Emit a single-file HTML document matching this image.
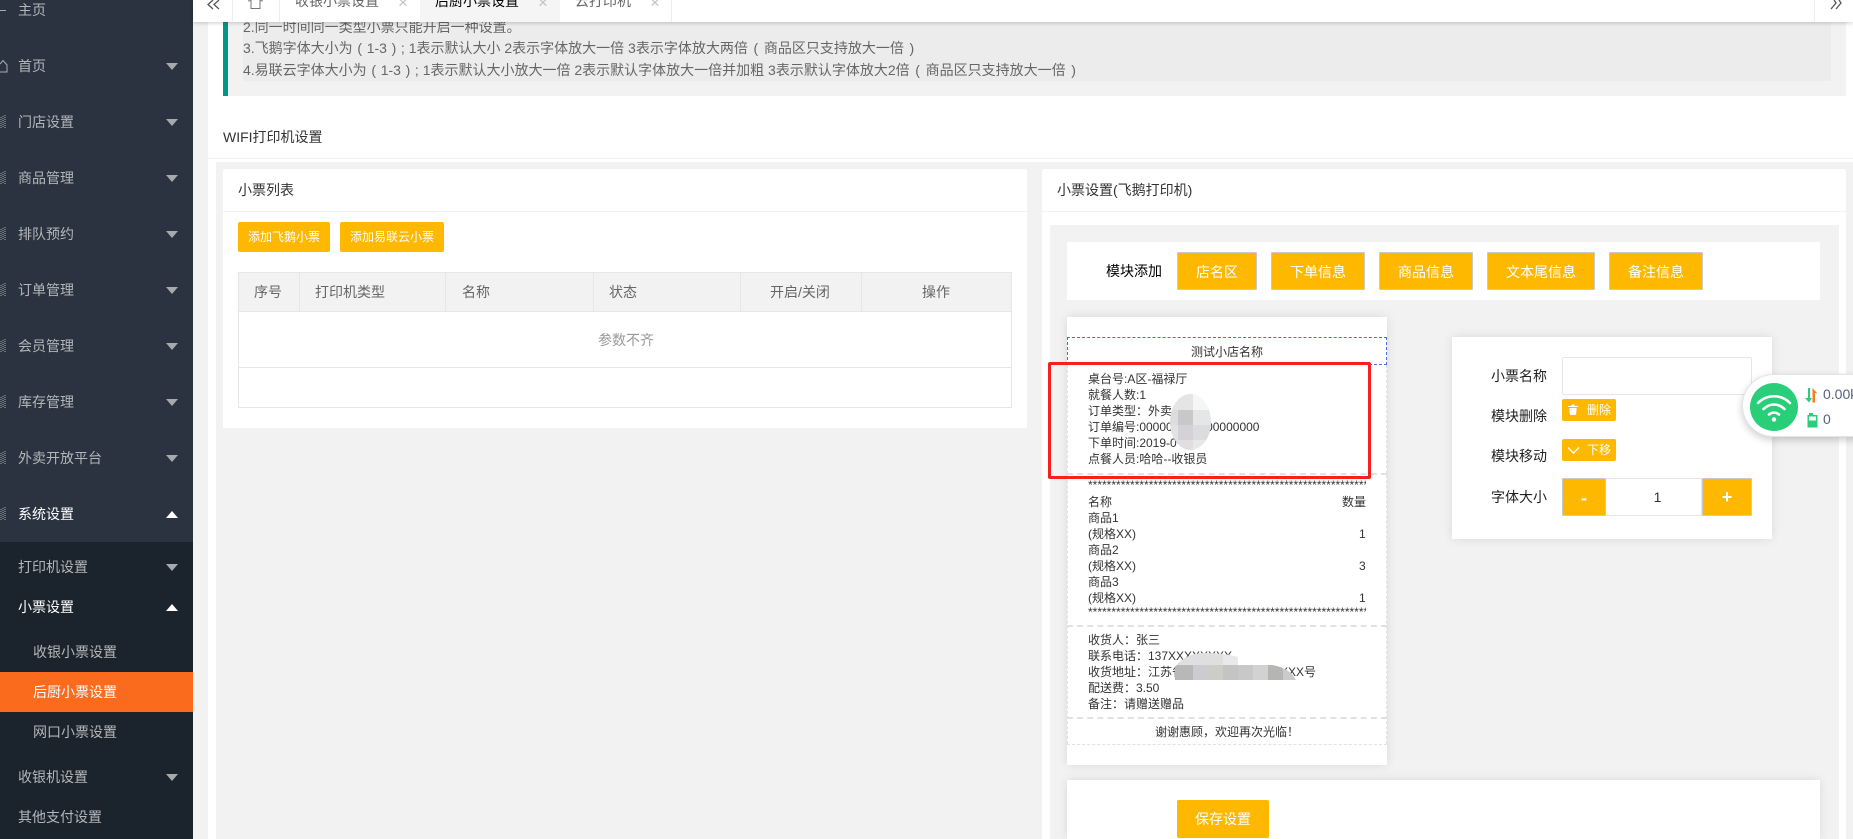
<!DOCTYPE html>
<html lang="zh-CN">
<head>
<meta charset="utf-8">
<title>后厨小票设置</title>
<style>
html,body{margin:0;padding:0;width:1853px;height:839px;overflow:hidden;background:#fff}
body{position:relative;font-family:"Liberation Sans","Noto Sans CJK SC",sans-serif;font-size:14px;color:#333}
.a{position:absolute;box-sizing:border-box}
.t{position:absolute;white-space:nowrap;line-height:20px;height:20px}
.s{font-size:12px;line-height:16px;height:16px;color:#333}
.side{color:#b4b7ba;font-size:14px}
.tri{position:absolute;left:166px;width:0;height:0;border-left:6px solid transparent;border-right:6px solid transparent;border-top:7px solid #a6aaae}
.tri.up{border-top:0;border-bottom:7px solid #fff}
.btn{position:absolute;box-sizing:border-box;background:#ffb800;color:#fff;text-align:center;border-radius:2px;white-space:nowrap}
.mod{top:252px;height:38px;line-height:38px;font-size:14px;border:1px solid #c9c9c9;border-radius:1px}
.th{position:absolute;top:272px;height:40px;line-height:40px;color:#666;white-space:nowrap}
.vl{position:absolute;top:272px;height:40px;width:1px;background:#e6e6e6}
.dash{position:absolute;left:1067px;width:320px;height:0;border-top:1px dashed #e2e2e2}
.p{display:inline-block;width:14px;text-align:center}
.q{display:inline-block;width:16px;text-align:center}
.x{font-size:17px;color:#c2c2c2}
</style>
</head>
<body>

<!-- sidebar -->
<div class="a" style="left:0;top:0;width:193px;height:839px;background:#2a333f"></div>
<div class="a" style="left:0;top:542px;width:193px;height:297px;background:#1b232c"></div>
<div class="a" style="left:0;top:672px;width:193px;height:40px;background:#fb6b1e"></div>

<svg class="a" style="left:0;top:0" width="8" height="530" viewBox="0 0 8 530" fill="none" stroke="#a9adb1">
<path d="M0 10.5H6"/>
<path d="M0 64L3 60.5L7 65V72H0"/>
<g stroke-width="1" stroke-dasharray="1 1">
<path d="M1 117V128M3 116V128M5 115V128"/>
<path d="M1 173V184M3 172V184M5 171V184"/>
<path d="M1 229V240M3 228V240M5 227V240"/>
<path d="M1 285V296M3 284V296M5 283V296"/>
<path d="M1 341V352M3 340V352M5 339V352"/>
<path d="M1 397V408M3 396V408M5 395V408"/>
<path d="M1 453V464M3 452V464M5 451V464"/>
<path d="M1 509V520M3 508V520M5 507V520"/>
</g>
</svg>

<div class="t side" style="left:18px;top:0">主页</div>
<div class="t side" style="left:18px;top:56px">首页</div><div class="tri" style="top:63px"></div>
<div class="t side" style="left:18px;top:112px">门店设置</div><div class="tri" style="top:119px"></div>
<div class="t side" style="left:18px;top:168px">商品管理</div><div class="tri" style="top:175px"></div>
<div class="t side" style="left:18px;top:224px">排队预约</div><div class="tri" style="top:231px"></div>
<div class="t side" style="left:18px;top:280px">订单管理</div><div class="tri" style="top:287px"></div>
<div class="t side" style="left:18px;top:336px">会员管理</div><div class="tri" style="top:343px"></div>
<div class="t side" style="left:18px;top:392px">库存管理</div><div class="tri" style="top:399px"></div>
<div class="t side" style="left:18px;top:448px">外卖开放平台</div><div class="tri" style="top:455px"></div>
<div class="t side" style="left:18px;top:504px;color:#fff">系统设置</div><div class="tri up" style="top:511px"></div>
<div class="t side" style="left:18px;top:557px">打印机设置</div><div class="tri" style="top:564px"></div>
<div class="t side" style="left:18px;top:597px;color:#fff">小票设置</div><div class="tri up" style="top:604px"></div>
<div class="t side" style="left:33px;top:642px">收银小票设置</div>
<div class="t side" style="left:33px;top:682px;color:#fff">后厨小票设置</div>
<div class="t side" style="left:33px;top:722px">网口小票设置</div>
<div class="t side" style="left:18px;top:767px">收银机设置</div><div class="tri" style="top:774px"></div>
<div class="t side" style="left:18px;top:807px">其他支付设置</div>

<!-- gutter -->
<div class="a" style="left:193px;top:0;width:15px;height:839px;background:#f2f2f2"></div>

<!-- notice -->
<div class="a" style="left:223px;top:0;width:1623px;height:96px;background:#f2f2f2;border-left:5px solid #009688"></div>
<div class="a" style="left:243px;top:0;width:1588px;height:81px;background:#ececec"></div>
<div class="t" style="left:243px;top:17px;color:#666">2.同一时间同一类型小票只能开启一种设置。</div>
<div class="t" style="left:243px;top:38px;color:#666">3.飞鹅字体大小为<span class="p">(</span>1-3<span class="p">)</span>; 1表示默认大小 2表示字体放大一倍 3表示字体放大两倍<span class="q">(</span>商品区只支持放大一倍<span class="q">)</span></div>
<div class="t" style="left:243px;top:60px;color:#666">4.易联云字体大小为<span class="p">(</span>1-3<span class="p">)</span>; 1表示默认大小放大一倍 2表示默认字体放大一倍并加粗 3表示默认字体放大2倍<span class="q">(</span>商品区只支持放大一倍<span class="q">)</span></div>

<!-- header tabs -->
<div class="a" style="left:193px;top:0;width:1660px;height:22px;background:#fff;box-shadow:0 1px 4px rgba(0,0,0,.2)"></div>
<div class="a" style="left:420px;top:0;width:140px;height:22px;background:#f5f5f5"></div>
<div class="a" style="left:232px;top:0;width:1px;height:22px;background:#eee"></div>
<div class="a" style="left:279px;top:0;width:1px;height:22px;background:#eee"></div>
<div class="a" style="left:671px;top:0;width:1px;height:22px;background:#eee"></div>
<div class="a" style="left:1814px;top:0;width:1px;height:22px;background:#eee"></div>
<svg class="a" style="left:205px;top:0" width="16" height="10" fill="none" stroke="#555" stroke-width="1.3"><path d="M8 0L3 4.5L8 9M14 0L9 4.5L14 9"/></svg>
<svg class="a" style="left:247px;top:0" width="18" height="10" fill="none" stroke="#777"><path d="M1 1L4 .5V8.5H13V.5L16 1"/></svg>
<svg class="a" style="left:1828px;top:0" width="16" height="10" fill="none" stroke="#555" stroke-width="1.3"><path d="M6 0L8 3L3 9M11 0L13 3L8 9"/></svg>
<div class="t" style="left:295px;top:-9px;color:#666">收银小票设置</div>
<div class="t" style="left:435px;top:-9px;color:#000">后厨小票设置</div>
<div class="t" style="left:575px;top:-9px;color:#666">云打印机</div>
<div class="t x" style="left:398px;top:-7px">×</div>
<div class="t x" style="left:538px;top:-7px">×</div>
<div class="t x" style="left:650px;top:-7px">×</div>

<!-- title -->
<div class="t" style="left:223px;top:127px;color:#333">WIFI打印机设置</div>
<div class="a" style="left:208px;top:158px;width:1645px;height:1px;background:#f0f0f0"></div>

<!-- gray body -->
<div class="a" style="left:216px;top:162px;width:1637px;height:677px;background:#f2f2f2"></div>

<!-- left card -->
<div class="a" style="left:223px;top:169px;width:804px;height:259px;background:#fff;border-radius:2px"></div>
<div class="a" style="left:223px;top:211px;width:804px;height:1px;background:#f2f2f2"></div>
<div class="t" style="left:238px;top:180px;color:#333">小票列表</div>
<div class="btn" style="left:238px;top:222px;width:92px;height:30px;line-height:30px;font-size:12px">添加飞鹅小票</div>
<div class="btn" style="left:340px;top:222px;width:104px;height:30px;line-height:30px;font-size:12px">添加易联云小票</div>

<!-- table -->
<div class="a" style="left:238px;top:272px;width:774px;height:136px;border:1px solid #e6e6e6"></div>
<div class="a" style="left:238px;top:272px;width:774px;height:40px;background:#f2f2f2;border:1px solid #e6e6e6"></div>
<div class="vl" style="left:299px"></div>
<div class="vl" style="left:445px"></div>
<div class="vl" style="left:593px"></div>
<div class="vl" style="left:740px"></div>
<div class="vl" style="left:861px"></div>
<div class="th" style="left:254px">序号</div>
<div class="th" style="left:315px">打印机类型</div>
<div class="th" style="left:462px">名称</div>
<div class="th" style="left:609px">状态</div>
<div class="th" style="left:770px">开启/关闭</div>
<div class="th" style="left:922px">操作</div>
<div class="t" style="left:598px;top:330px;color:#999">参数不齐</div>
<div class="a" style="left:238px;top:367px;width:774px;height:1px;background:#e6e6e6"></div>

<!-- right card -->
<div class="a" style="left:1042px;top:169px;width:804px;height:670px;background:#fff;border-radius:2px 2px 0 0"></div>
<div class="a" style="left:1042px;top:211px;width:804px;height:1px;background:#f2f2f2"></div>
<div class="t" style="left:1057px;top:180px;color:#333">小票设置(飞鹅打印机)</div>
<div class="a" style="left:1050px;top:225px;width:789px;height:614px;background:#f2f2f2"></div>

<!-- module bar -->
<div class="a" style="left:1067px;top:242px;width:753px;height:58px;background:#fff"></div>
<div class="t" style="left:1106px;top:261px;color:#000">模块添加</div>
<div class="btn mod" style="left:1177px;width:80px">店名区</div>
<div class="btn mod" style="left:1271px;width:94px">下单信息</div>
<div class="btn mod" style="left:1379px;width:94px">商品信息</div>
<div class="btn mod" style="left:1487px;width:108px">文本尾信息</div>
<div class="btn mod" style="left:1609px;width:94px">备注信息</div>

<!-- receipt -->
<div class="a" style="left:1067px;top:317px;width:320px;height:448px;background:#fff;box-shadow:0 0 10px rgba(0,0,0,.1)"></div>
<div class="a" style="left:1067px;top:337px;width:320px;height:28px;border:1px dashed #4a6ee0"></div>
<div class="a" style="left:1067px;top:365px;width:320px;height:379px;border-left:1px dashed #e2e2e2;border-right:1px dashed #e2e2e2"></div>
<div class="dash" style="top:473px;border-top-width:2px"></div>
<div class="dash" style="top:625px;border-top-width:2px"></div>
<div class="dash" style="top:717px;border-top-width:2px"></div>
<div class="dash" style="top:744px"></div>

<div class="t s" style="left:1067px;width:320px;text-align:center;top:344px">测试小店名称</div>
<div class="t s" style="left:1088px;top:371px">桌台号:A区-福禄厅</div>
<div class="t s" style="left:1088px;top:387px">就餐人数:1</div>
<div class="t s" style="left:1088px;top:403px">订单类型：外卖</div>
<div class="t s" style="left:1088px;top:419px">订单编号:000000000000000000</div>
<div class="t s" style="left:1088px;top:435px">下单时间:2019-0</div>
<div class="t s" style="left:1088px;top:451px">点餐人员:哈哈--收银员</div>

<div class="t s" style="left:1088px;top:477px;width:278px;overflow:hidden">************************************************************</div>
<div class="t s" style="left:1088px;top:494px">名称</div><div class="t s" style="left:1342px;top:494px">数量</div>
<div class="t s" style="left:1088px;top:510px">商品1</div>
<div class="t s" style="left:1088px;top:526px">(规格XX)</div><div class="t s" style="left:1359px;top:526px">1</div>
<div class="t s" style="left:1088px;top:542px">商品2</div>
<div class="t s" style="left:1088px;top:558px">(规格XX)</div><div class="t s" style="left:1359px;top:558px">3</div>
<div class="t s" style="left:1088px;top:574px">商品3</div>
<div class="t s" style="left:1088px;top:590px">(规格XX)</div><div class="t s" style="left:1359px;top:590px">1</div>
<div class="t s" style="left:1088px;top:604px;width:278px;overflow:hidden">************************************************************</div>

<div class="t s" style="left:1088px;top:632px">收货人：张三</div>
<div class="t s" style="left:1088px;top:648px">联系电话：137XXXXXXXX</div>
<div class="t s" style="left:1088px;top:664px">收货地址：江苏省XXXXXXXXXXXXXXX号</div>
<div class="t s" style="left:1088px;top:680px">配送费：3.50</div>
<div class="t s" style="left:1088px;top:696px">备注：请赠送赠品</div>
<div class="t s" style="left:1067px;width:320px;text-align:center;top:724px">谢谢惠顾，欢迎再次光临！</div>

<!-- mosaics -->
<svg class="a" style="left:1160px;top:385px" width="60" height="75" viewBox="1160 385 60 75">
<defs><clipPath id="c1"><ellipse cx="1190.5" cy="422" rx="20.5" ry="28"/></clipPath></defs>
<g clip-path="url(#c1)">
<rect x="1160" y="385" width="33" height="25" fill="#e6e5e5"/>
<rect x="1193" y="385" width="27" height="25" fill="#f5f6f6"/>
<rect x="1160" y="410" width="18" height="15" fill="#dcdcdc"/>
<rect x="1178" y="410" width="15" height="15" fill="#c8c8c8"/>
<rect x="1193" y="410" width="27" height="15" fill="#e5e6e8"/>
<rect x="1160" y="425" width="18" height="15" fill="#e2e2e4"/>
<rect x="1178" y="425" width="15" height="15" fill="#d2d2d7"/>
<rect x="1193" y="425" width="27" height="15" fill="#dcdcdf"/>
<rect x="1160" y="440" width="33" height="15" fill="#e2dedd"/>
<rect x="1193" y="440" width="27" height="15" fill="#e8e8e8"/>
</g>
</svg>
<svg class="a" style="left:1170px;top:650px" width="130" height="32" viewBox="1170 650 130 32">
<defs><clipPath id="c2"><path d="M1175 680V667Q1185 653 1205 653Q1225 653 1238 657V665H1272Q1290 668 1296 680Z"/></clipPath></defs>
<g clip-path="url(#c2)">
<rect x="1170" y="650" width="53" height="15" fill="#dfdfdf"/>
<rect x="1223" y="650" width="15" height="15" fill="#e9e9e9"/>
<rect x="1170" y="665" width="23" height="15" fill="#b8b8b8"/>
<rect x="1193" y="665" width="15" height="15" fill="#ccccd0"/>
<rect x="1208" y="665" width="15" height="15" fill="#cdcdc8"/>
<rect x="1223" y="665" width="15" height="15" fill="#c4c4c4"/>
<rect x="1238" y="665" width="15" height="15" fill="#c8c8c8"/>
<rect x="1253" y="665" width="15" height="15" fill="#d2d2d2"/>
<rect x="1268" y="665" width="15" height="15" fill="#b5b5b3"/>
<rect x="1283" y="665" width="15" height="15" fill="#cacacf"/>
</g>
</svg>

<!-- red box -->
<div class="a" style="left:1048px;top:362px;width:323px;height:117px;border:3px solid #f5211a;border-radius:2px"></div>

<!-- settings panel -->
<div class="a" style="left:1452px;top:337px;width:320px;height:202px;background:#fff;box-shadow:0 0 10px rgba(0,0,0,.1)"></div>
<div class="t" style="left:1491px;top:366px;color:#222">小票名称</div>
<div class="a" style="left:1562px;top:357px;width:190px;height:38px;border:1px solid #e6e6e6;border-radius:2px"></div>
<div class="t" style="left:1491px;top:406px;color:#222">模块删除</div>
<div class="btn" style="left:1562px;top:399px;width:54px;height:22px;line-height:22px;font-size:12px;text-align:left;padding-left:25px">删除</div>
<svg class="a" style="left:1568px;top:404px" width="11" height="12" fill="#fff"><path d="M0 2H10V3H0ZM3.5 .5H6.5V2H3.5ZM1.3 4H8.7L8 11H2Z"/></svg>
<div class="t" style="left:1491px;top:446px;color:#222">模块移动</div>
<div class="btn" style="left:1562px;top:439px;width:54px;height:22px;line-height:22px;font-size:12px;text-align:left;padding-left:25px">下移</div>
<svg class="a" style="left:1567px;top:446px" width="13" height="9" fill="none" stroke="#fff" stroke-width="1.4"><path d="M1 1.5L6.5 7L12 1.5"/></svg>
<div class="t" style="left:1491px;top:487px;color:#222">字体大小</div>
<div class="btn" style="left:1562px;top:478px;width:44px;height:38px;line-height:38px;font-size:18px;font-weight:bold;border:1px solid #c9c9c9;border-radius:1px">-</div>
<div class="a" style="left:1606px;top:478px;width:96px;height:38px;border:1px solid #e6e6e6;border-left:0;line-height:36px;text-align:center;color:#333;font-size:14px;padding-left:8px">1</div>
<div class="btn" style="left:1702px;top:478px;width:50px;height:38px;line-height:36px;font-size:18px;font-weight:bold;border:1px solid #c9c9c9;border-radius:1px">+</div>

<!-- save card -->
<div class="a" style="left:1067px;top:780px;width:753px;height:59px;background:#fff;box-shadow:0 0 10px rgba(0,0,0,.1)"></div>
<div class="btn" style="left:1177px;top:800px;width:92px;height:38px;line-height:38px;font-size:14px">保存设置</div>

<!-- floating widget -->
<div class="a" style="left:1742px;top:374px;width:140px;height:63px;background:#fff;border:1px solid #e4e4e4;border-radius:32px;box-shadow:0 3px 8px rgba(0,0,0,.2)"></div>
<svg class="a" style="left:1750px;top:383px" width="48" height="48" viewBox="0 0 48 48">
<circle cx="24" cy="24" r="24" fill="#28cf78"/>
<g fill="none" stroke="#fff" stroke-width="2.6" stroke-linecap="round">
<path d="M8 20C17 11 31 11 40 20"/>
<path d="M13.5 26C20 20 28 20 34.500 26"/>
<path d="M19 31.500C22 29 26 29 29 31.500"/>
</g>
<circle cx="24" cy="36.500" r="2.200" fill="#fff"/>
</svg>
<svg class="a" style="left:1805px;top:388px" width="13" height="15" viewBox="0 0 13 15">
<path d="M3 0H5V10H7L4 14.500L0 10H3Z" fill="#28cf78"/>
<path d="M7.500 0L12 5H10V14.500H7.500Z" fill="#fb7a1e"/>
</svg>
<svg class="a" style="left:1807px;top:413px" width="11" height="15" viewBox="0 0 11 15">
<path d="M2 0H6V2H10.500V14.500H.5V2H2Z" fill="#28cf78"/>
<rect x="2" y="3.500" width="7" height="4" fill="#fff"/>
</svg>
<div class="t" style="left:1823px;top:384px;color:#5a5f7a">0.00k</div>
<div class="t" style="left:1823px;top:409px;color:#5a5f7a">0</div>

</body>
</html>
